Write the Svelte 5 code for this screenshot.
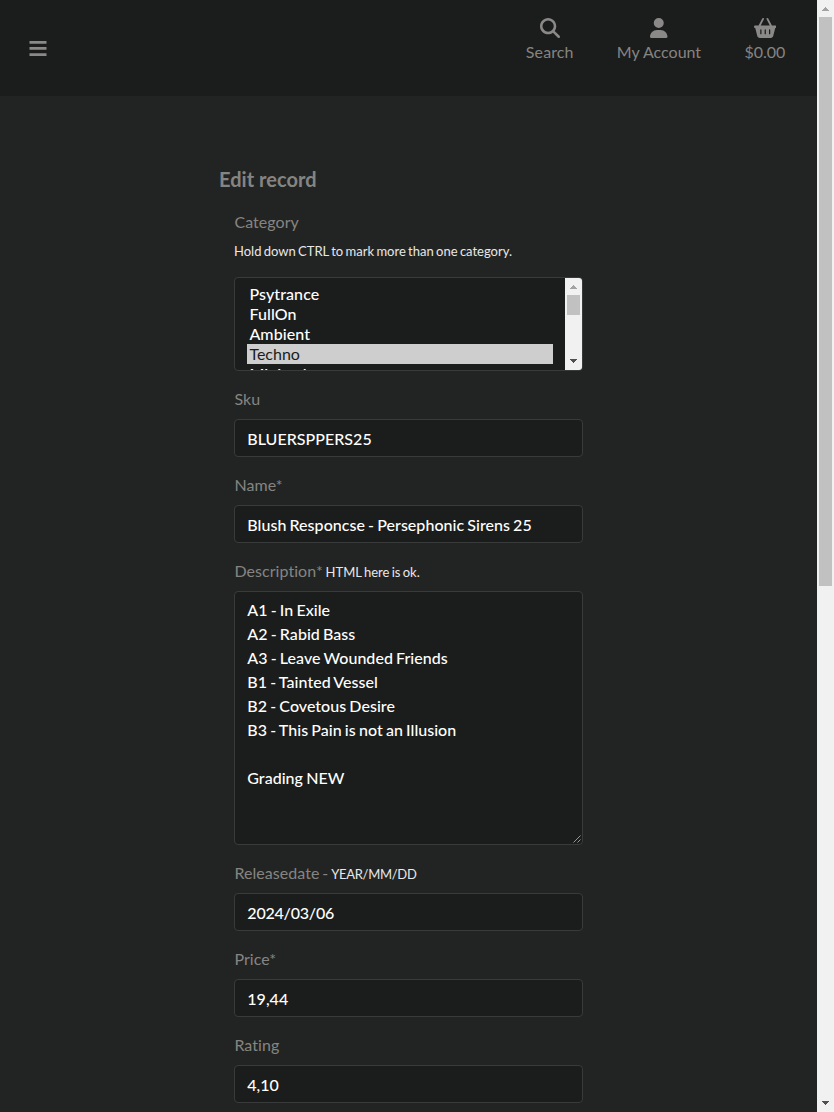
<script>
  const nav = [
    {
      label: 'Search', box: '0 0 512 512', w: 20,
      d: 'M416 208c0 45.9-14.9 88.3-40 122.7L502.6 457.4c12.5 12.5 12.5 32.8 0 45.3s-32.8 12.5-45.3 0L330.7 376c-34.4 25.2-76.8 40-122.7 40C93.1 416 0 322.9 0 208S93.1 0 208 0S416 93.1 416 208zM208 352a144 144 0 1 0 0-288 144 144 0 1 0 0 288z'
    },
    {
      label: 'My Account', box: '0 0 448 512', w: 17.5,
      d: 'M224 256A128 128 0 1 0 224 0a128 128 0 1 0 0 256zm-45.7 48C79.8 304 0 383.8 0 482.3C0 498.7 13.3 512 29.7 512H418.3c16.4 0 29.7-13.3 29.7-29.7C448 383.8 368.2 304 269.7 304H178.3z'
    },
    {
      label: '$0.00', box: '0 0 576 512', w: 22.5,
      d: 'M253.3 35.1c6.1-11.8 1.5-26.3-10.2-32.4s-26.3-1.5-32.4 10.2L117.6 192H32c-17.7 0-32 14.3-32 32s14.3 32 32 32L83.9 463.5C91 492 116.6 512 146 512H430c29.4 0 55-20 62.1-48.5L544 256c17.7 0 32-14.3 32-32s-14.3-32-32-32H458.4L365.3 12.9C359.2 1.2 344.7-3.4 332.9 2.7s-16.3 20.6-10.2 32.4L404.3 192H171.7L253.3 35.1zM192 304v96c0 8.8-7.2 16-16 16s-16-7.2-16-16V304c0-8.8 7.2-16 16-16s16 7.2 16 16zm96-16c8.8 0 16 7.2 16 16v96c0 8.8-7.2 16-16 16s-16-7.2-16-16V304c0-8.8 7.2-16 16-16zm128 16v96c0 8.8-7.2 16-16 16s-16-7.2-16-16V304c0-8.8 7.2-16 16-16s16 7.2 16 16z'
    }
  ];
  const categories = ['Psytrance', 'FullOn', 'Ambient', 'Techno', 'Minimal'];
  const fields = [
    { label: 'Sku', value: 'BLUERSPPERS25' },
    { label: 'Name*', value: 'Blush Responcse - Persephonic Sirens 25' },
    {
      label: 'Description*', hint: 'HTML here is ok.', multi: true,
      value: 'A1 - In Exile\nA2 - Rabid Bass\nA3 - Leave Wounded Friends\nB1 - Tainted Vessel\nB2 - Covetous Desire\nB3 - This Pain is not an Illusion\n\nGrading NEW'
    },
    { label: 'Releasedate -', hint: 'YEAR/MM/DD', value: '2024/03/06', tight: true },
    { label: 'Price*', value: '19,44' },
    { label: 'Rating', value: '4,10' }
  ];
</script>

{#snippet scrollbar(thumb)}
  <div class="scrollbar">
    <svg class="arrow up" width="17" height="17" viewBox="0 0 17 17" shape-rendering="crispEdges"><path d="M8 7h1v1h1v1h1v1h1v1H5v-1h1V9h1V8h1z" /></svg>
    <div class="thumb" style="height: {thumb}px"></div>
    <svg class="arrow down" width="17" height="17" viewBox="0 0 17 17" shape-rendering="crispEdges"><path d="M5 6h7v1h-1v1h-1v1H9v1H8V9H7V8H6V7H5z" /></svg>
  </div>
{/snippet}

<div class="window">
  <div class="page">
    <header>
      <svg class="bars" width="18" height="16" viewBox="0 0 18 16"><path d="M.5 1h17v2.700h-17zM.5 7h17v2.700h-17zM.5 13.200h17v2.700h-17z" /></svg>
      <nav>
        {#each nav as item}
          <div class="item">
            <svg width={item.w} height="20" viewBox={item.box}><path d={item.d} /></svg>
            <span>{item.label}</span>
          </div>
        {/each}
      </nav>
    </header>
    <main>
      <h1>Edit record</h1>
      <form>
        <div class="label">Category</div>
        <div class="note">Hold down CTRL to mark more than one category.</div>
        <div class="list">
          <div class="options">
            {#each categories as c}
              <div class="option" class:selected={c === 'Techno'}>{c}</div>
            {/each}
          </div>
          {@render scrollbar(20)}
        </div>
        {#each fields as f}
          <div class="label">{f.label}{#if f.hint}{' '}<small class:tight={f.tight}>{f.hint}</small>{/if}</div>
          {#if f.multi}
            <div class="control multi">
              <div class="text">{f.value}</div>
              <svg class="grip" width="8" height="8" viewBox="0 0 8 8"><path d="M0.500 7.500l7-7M4.500 7.500l3-3" /></svg>
            </div>
          {:else}
            <div class="control" class:tight={f.tight}>{f.value}</div>
          {/if}
        {/each}
      </form>
    </main>
  </div>
  {@render scrollbar(569)}
</div>

<style>
  :global(body) { background: #222423; overflow: hidden; }
  .window {
    display: flex; height: 1112px; overflow: hidden; background: #222423;
    font: 16px/24px Lato, sans-serif; color: #868482;
    font-variant-ligatures: none;
  }
  .page { flex: 1; min-width: 0; }
  header {
    display: flex; justify-content: space-between; align-items: center;
    height: 96px; box-sizing: border-box; padding: 0 31.700px 0 29px; background: #1b1d1c;
  }
  svg { display: block; fill: #8b8987; }
  nav { display: flex; gap: 43.300px; align-self: flex-start; padding-top: 18px; }
  .item { display: flex; flex-direction: column; align-items: center; gap: 2px; }
  .item:first-child span { letter-spacing: 0.1px; }
  main { padding: 68px 0 0 219px; }
  h1 { margin: 0; font-size: 20px; line-height: 30px; font-weight: 700; letter-spacing: 0.05px; }
  form { width: 349px; padding: 16px 0 0 15px; }
  .label { height: 24px; margin-bottom: 8px; padding-left: 0.400px; white-space: nowrap; letter-spacing: 0.06px; word-spacing: -1.300px; }
  small, .note { font-size: 13px; color: #e8e8e8; letter-spacing: 0; word-spacing: -1px; }
  .note { margin: -3px 0 14px; height: 24px; white-space: nowrap; }
  .list, .control {
    box-sizing: border-box; border: 1px solid #393b3a; border-radius: 4px;
    background: #1b1d1c; color: #fff; margin-bottom: 16px; font-weight: 500; word-spacing: -0.900px;
    letter-spacing: 0.03px;
  }
  .list { display: flex; height: 94px; overflow: hidden; }
  .options { flex: 1; padding: 6px 12px; overflow: hidden; letter-spacing: 0.1px; }
  .option { height: 20px; line-height: 20px; padding-left: 2.400px; }
  .selected { background: #cecece; color: #1b1d1c; font-weight: 400; letter-spacing: 0; }
  .control { height: 38px; padding: 7px 12px 5px 12.300px; }
  .multi { display: flex; height: 254px; padding: 6px 1px 1px 12.300px; }
  .text { flex: 1; white-space: pre-wrap; }
  .tight { letter-spacing: -0.2px; }
  small.tight { letter-spacing: -0.3px; }
  .grip { align-self: flex-end; fill: none; stroke: #b5b5b5; stroke-width: 0.8; }
  .scrollbar { display: flex; flex-direction: column; width: 17px; background: #f1f1f1; }
  .arrow { flex: none; }
  .up { fill: #a3a3a3; }
  .down { fill: #505050; margin-top: auto; }
  .thumb { flex: none; margin: 0 2px; background: #c1c1c1; }
</style>
